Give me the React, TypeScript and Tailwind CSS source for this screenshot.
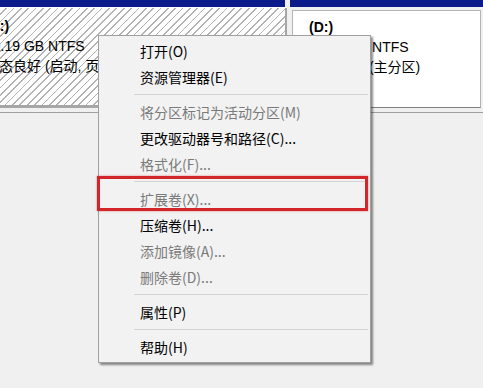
type MenuEntry = { label: string; disabled?: boolean } | 'sep';

const menuEntries: MenuEntry[] = [
  { label: '打开(O)' },
  { label: '资源管理器(E)' },
  'sep',
  { label: '将分区标记为活动分区(M)', disabled: true },
  { label: '更改驱动器号和路径(C)...' },
  { label: '格式化(F)...', disabled: true },
  'sep',
  { label: '扩展卷(X)...', disabled: true },
  { label: '压缩卷(H)...' },
  { label: '添加镜像(A)...', disabled: true },
  { label: '删除卷(D)...', disabled: true },
  'sep',
  { label: '属性(P)' },
  'sep',
  { label: '帮助(H)' },
];

function ContextMenu() {
  return (
    <div className="absolute left-[98px] top-[35px] w-[273px] border border-[#a0a0a0] bg-[#f2f2f2] py-[2px] shadow-[2px_2px_2px_rgba(0,0,0,0.45)] font-['Noto_Sans_CJK_SC',sans-serif] text-[14px]">
      {menuEntries.map((entry, i) =>
        entry === 'sep' ? (
          <div key={i} className="flex h-[9px] items-center pl-[35px] pr-[2px]">
            <div className="h-px w-full bg-[#d4d4d4]" />
          </div>
        ) : (
          <div
            key={i}
            className={`flex h-[26px] items-center pl-[41px] leading-none ${
              entry.disabled ? 'text-[#7a7a7a]' : 'text-black'
            }`}
          >
            {entry.label}
          </div>
        )
      )}
    </div>
  );
}

export default function App() {
  return (
    <div className="relative h-[388px] w-[483px] overflow-hidden bg-[#f0f0f0] font-['Liberation_Sans','Noto_Sans_CJK_SC',sans-serif] text-[14px] text-black">
      {/* Disk row */}
      <div className="flex h-[108px]">
        {/* C: selected, hatched */}
        <div className="flex w-[287px] flex-col">
          <div className="h-[7px] w-[285px] bg-[#0c1b8a]" />
          <div className="h-px bg-white" />
          <div className="flex-1 border-r-2 border-b-[3px] border-[#a6a6a6] bg-white bg-[image:repeating-linear-gradient(135deg,#ffffff_0px,#ffffff_4px,#b2b2b2_4px,#b2b2b2_5.2px)]">
            <div className="-ml-[15px] flex flex-col pt-[8px] leading-[20px] whitespace-nowrap">
              <span className="font-bold">(C:)</span>
              <span>59.19 GB NTFS</span>
              <span>状态良好 (启动, 页面文件, 故障转储, 主分区)</span>
            </div>
          </div>
        </div>

        {/* D: */}
        <div className="ml-[3px] flex flex-1 flex-col">
          <div className="h-[7px] bg-[#0c1b8a]" />
          <div className="flex-1 px-[2px] pt-[3px]">
            <div className="h-full border border-[#b4b4b4] border-b-[#808080] bg-white pl-[16px] pt-[6px] leading-[20px] whitespace-nowrap">
              <div className="font-bold">(D:)</div>
              <div>60.80 GB NTFS</div>
              <div>状态良好 (主分区)</div>
            </div>
          </div>
        </div>
      </div>

      <div className="mt-[4px] h-px bg-[#a0a0a0]" />

      <ContextMenu />

      {/* highlight box */}
      <div className="absolute left-[97px] top-[176px] h-[35px] w-[271px] border-[3px] border-[#d3262a] shadow-[0_0_2px_rgba(200,30,30,0.5)]" />
    </div>
  );
}
